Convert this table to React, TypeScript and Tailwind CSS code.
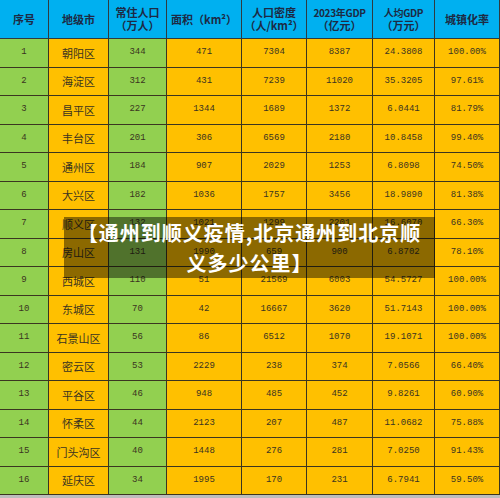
const cols = ['w-[49px]', 'w-[60px]', 'w-[58px]', 'w-[75px]', 'w-[65px]', 'w-[66px]', 'w-[62px]', 'w-[65px]']

const header: string[][] = [
  ['序号'],
  ['地级市'],
  ['常住人口', '（万人）'],
  ['面积（km²）'],
  ['人口密度', '（人/km²）'],
  ['2023年GDP', '（亿元）'],
  ['人均GDP', '（万元）'],
  ['城镇化率'],
]

const rows: string[][] = [
  ['1', '朝阳区', '344', '471', '7304', '8387', '24.3808', '100.00%'],
  ['2', '海淀区', '312', '431', '7239', '11020', '35.3205', '97.61%'],
  ['3', '昌平区', '227', '1344', '1689', '1372', '6.0441', '81.79%'],
  ['4', '丰台区', '201', '306', '6569', '2180', '10.8458', '99.40%'],
  ['5', '通州区', '184', '907', '2029', '1253', '6.8098', '74.50%'],
  ['6', '大兴区', '182', '1036', '1757', '3456', '18.9890', '81.38%'],
  ['7', '顺义区', '132', '1021', '1299', '2201', '16.6070', '66.30%'],
  ['8', '房山区', '131', '1990', '659', '900', '6.8702', '78.10%'],
  ['9', '西城区', '110', '51', '21569', '6003', '54.5727', '100.00%'],
  ['10', '东城区', '70', '42', '16667', '3620', '51.7143', '100.00%'],
  ['11', '石景山区', '56', '86', '6512', '1070', '19.1071', '100.00%'],
  ['12', '密云区', '53', '2229', '238', '374', '7.0566', '66.40%'],
  ['13', '平谷区', '46', '948', '485', '452', '9.8261', '60.90%'],
  ['14', '怀柔区', '44', '2123', '207', '487', '11.0682', '75.88%'],
  ['15', '门头沟区', '40', '1448', '276', '281', '7.0250', '91.43%'],
  ['16', '延庆区', '34', '1995', '170', '231', '6.7941', '59.50%'],
]

const cellBg = ['bg-[#92d050]', 'bg-[#ffc000]', 'bg-[#92d050]', 'bg-[#ffc000]', 'bg-[#ffc000]', 'bg-[#ffc000]', 'bg-[#ffc000]', 'bg-[#ffc000]']

export default function App() {
  return (
    <div className="relative w-[500px] h-[498px] overflow-hidden bg-[#bdbdbd]">
      {/* ── Table ─────────────────────────────── */}
      <div className="flex flex-col">
        <div className="flex h-[39px]">
          {header.map((lines, i) => (
            <div
              key={i}
              className={`${cols[i]} shrink-0 flex flex-col items-center justify-center whitespace-nowrap border-r border-b border-[#2f3b3f] bg-[#00b0f0] text-[#1d2a44] font-bold text-[11px] leading-[13px] [font-family:'Noto_Sans_CJK_SC',sans-serif]`}
            >
              {lines.map((l) => (
                <span key={l} className={l.includes('GDP') ? 'text-[10px] tracking-[-0.3px]' : ''}>
                  {l}
                </span>
              ))}
            </div>
          ))}
        </div>
        {rows.map((r) => (
          <div key={r[0]} className="flex h-[28.5px]">
            {r.map((v, i) => (
              <div
                key={i}
                className={`${cols[i]} ${cellBg[i]} shrink-0 flex items-center justify-center border-r border-b border-[#3b3520] text-[#3a3320] ${
                  i === 1
                    ? "text-[11px] [font-family:'Noto_Sans_CJK_SC',sans-serif]"
                    : "text-[9px] [font-family:'Liberation_Mono',monospace]"
                }`}
              >
                {v}
              </div>
            ))}
          </div>
        ))}
      </div>

      {/* ── Title overlay ─────────────────────── */}
      <div className="absolute left-[64px] top-[217px] w-[371px] h-[61px] bg-black/45 flex flex-col items-center justify-center text-white font-bold text-[20px] leading-[30px] tracking-[1px] [text-spacing-trim:space-all] [font-family:'Noto_Sans_CJK_SC',sans-serif]">
        <span>【通州到顺义疫情,北京通州到北京顺</span>
        <span>义多少公里】</span>
      </div>
    </div>
  )
}
